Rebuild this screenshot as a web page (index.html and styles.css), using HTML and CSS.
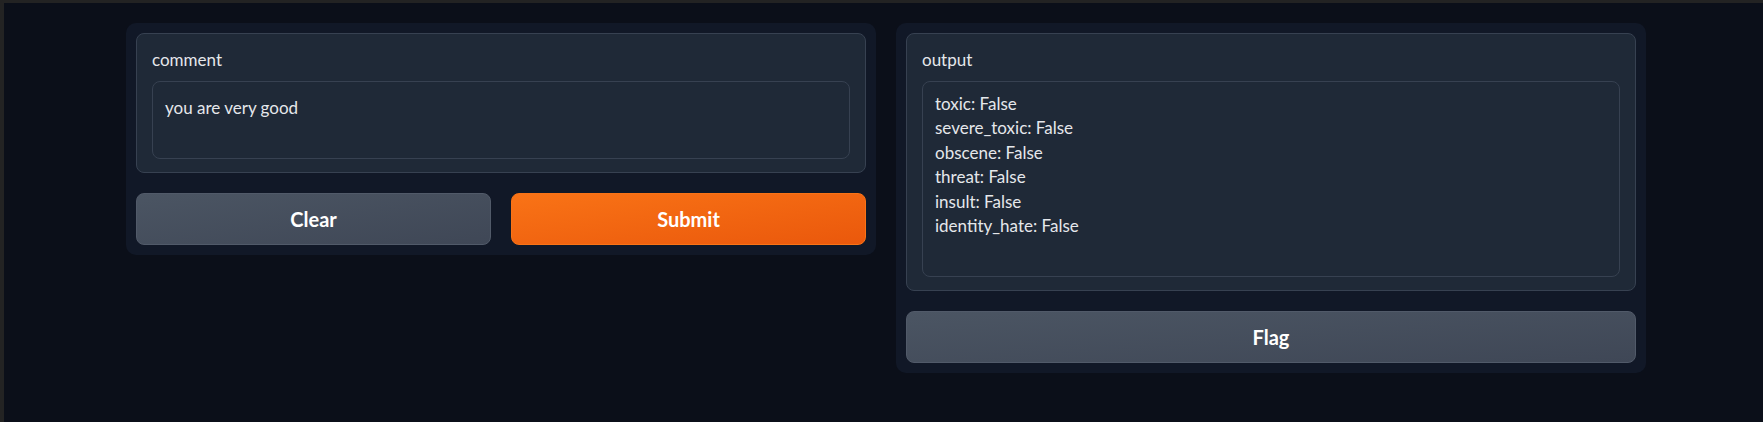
FILE: index.html
```html
<!DOCTYPE html>
<html lang="en">
<head>
<meta charset="utf-8">
<title>Toxic comment classifier</title>
<link rel="stylesheet" href="styles.css">
</head>
<body>
<div class="frame">
  <main class="app">
    <section class="panel">
      <div class="block">
        <label class="label" for="comment">comment</label>
        <textarea id="comment" class="input input-comment">you are very good</textarea>
      </div>
      <div class="actions">
        <button class="btn btn-secondary">Clear</button>
        <button class="btn btn-primary">Submit</button>
      </div>
    </section>
    <section class="panel">
      <div class="block">
        <label class="label" for="output">output</label>
        <textarea id="output" class="input input-output">toxic: False
severe_toxic: False
obscene: False
threat: False
insult: False
identity_hate: False</textarea>
      </div>
      <div class="actions">
        <button class="btn btn-secondary">Flag</button>
      </div>
    </section>
  </main>
</div>
</body>
</html>
```

FILE: styles.css
```css
* { box-sizing: border-box; }

html, body {
  margin: 0;
  padding: 0;
  height: 100%;
  background: #0b0f19;
}

.frame {
  min-height: 100%;
  border-top: 3px solid #232323;
  border-left: 4px solid #232323;
  background: #0b0f19;
  font-family: Lato, "Open Sans", sans-serif;
  color: #e5e7eb;
}

.app {
  display: flex;
  align-items: flex-start;
  gap: 20px;
  padding: 20px 0 0 122px;
}

.panel {
  width: 750px;
  flex: 0 0 750px;
  background: #111827;
  border-radius: 10px;
  padding: 10px;
  display: flex;
  flex-direction: column;
  gap: 20px;
}

.block {
  background: #1f2937;
  border: 1px solid #374151;
  border-radius: 8px;
  padding: 15px 15px 13px;
  display: flex;
  flex-direction: column;
}

.label {
  font-size: 17px;
  line-height: 22px;
  color: #e5e7eb;
  margin-bottom: 10px;
}

.input {
  display: block;
  width: 100%;
  resize: none;
  background: #1f2937;
  border: 1px solid #374151;
  border-radius: 8px;
  color: #e5e7eb;
  font-family: Lato, "Open Sans", sans-serif;
  font-size: 17px;
  line-height: 24.4px;
  padding: 14px 12px;
  outline: none;
  overflow: hidden;
}

.input-comment { height: 78px; }

.input-output {
  height: 196px;
  padding-top: 10px;
}

.actions {
  display: flex;
  gap: 20px;
}

.btn {
  flex: 1 1 0;
  height: 52px;
  border-radius: 8px;
  font-family: Lato, "Open Sans", sans-serif;
  font-size: 20px;
  font-weight: 700;
  color: #ffffff;
  cursor: pointer;
}

.btn-secondary {
  background: linear-gradient(to bottom right, #4b5563, #3f4756);
  border: 1px solid #515a69;
}

.btn-primary {
  background: linear-gradient(to bottom right, #f97316, #ea580c);
  border: 1px solid #f97316;
}
```
